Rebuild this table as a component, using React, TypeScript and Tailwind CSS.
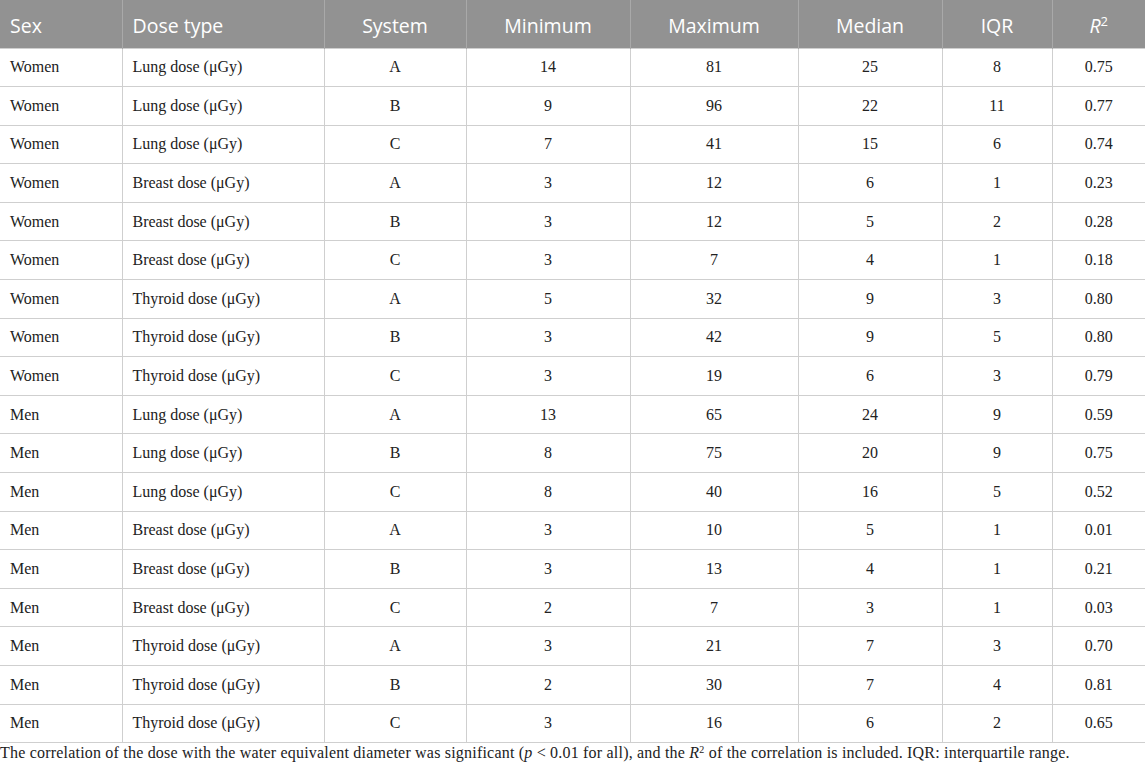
import React from 'react';

type Row = [string, string, string, number, number, number, number, string];

const ROWS: Row[] = [
  ['Women', 'Lung dose (μGy)', 'A', 14, 81, 25, 8, '0.75'],
  ['Women', 'Lung dose (μGy)', 'B', 9, 96, 22, 11, '0.77'],
  ['Women', 'Lung dose (μGy)', 'C', 7, 41, 15, 6, '0.74'],
  ['Women', 'Breast dose (μGy)', 'A', 3, 12, 6, 1, '0.23'],
  ['Women', 'Breast dose (μGy)', 'B', 3, 12, 5, 2, '0.28'],
  ['Women', 'Breast dose (μGy)', 'C', 3, 7, 4, 1, '0.18'],
  ['Women', 'Thyroid dose (μGy)', 'A', 5, 32, 9, 3, '0.80'],
  ['Women', 'Thyroid dose (μGy)', 'B', 3, 42, 9, 5, '0.80'],
  ['Women', 'Thyroid dose (μGy)', 'C', 3, 19, 6, 3, '0.79'],
  ['Men', 'Lung dose (μGy)', 'A', 13, 65, 24, 9, '0.59'],
  ['Men', 'Lung dose (μGy)', 'B', 8, 75, 20, 9, '0.75'],
  ['Men', 'Lung dose (μGy)', 'C', 8, 40, 16, 5, '0.52'],
  ['Men', 'Breast dose (μGy)', 'A', 3, 10, 5, 1, '0.01'],
  ['Men', 'Breast dose (μGy)', 'B', 3, 13, 4, 1, '0.21'],
  ['Men', 'Breast dose (μGy)', 'C', 2, 7, 3, 1, '0.03'],
  ['Men', 'Thyroid dose (μGy)', 'A', 3, 21, 7, 3, '0.70'],
  ['Men', 'Thyroid dose (μGy)', 'B', 2, 30, 7, 4, '0.81'],
  ['Men', 'Thyroid dose (μGy)', 'C', 3, 16, 6, 2, '0.65'],
];

const WIDTHS = [122, 202, 142, 164, 168, 144, 110, 93];

export default function App() {
  const th = 'font-normal border-l border-[#a9a9a9] first:border-l-0 px-[10px] pt-[3px]';
  const td = 'border-l border-t border-[#cfcfcf] first:border-l-0 px-[10px]';

  return (
    <div className="w-[1145px] h-[765px] bg-white overflow-hidden">
      <table className="w-[1145px] border-collapse table-fixed border-b border-[#cfcfcf]">
        <colgroup>
          {WIDTHS.map((w, i) => (
            <col key={i} style={{ width: w }} />
          ))}
        </colgroup>
        <thead>
          <tr
            className="h-[48px] bg-[#929292] text-white text-[19.5px]"
            style={{ fontFamily: '"Open Sans", "Noto Sans", sans-serif' }}
          >
            <th className={`${th} text-left`}>Sex</th>
            <th className={`${th} text-left`}>Dose type</th>
            <th className={`${th} text-center`}>System</th>
            <th className={`${th} text-center`}>Minimum</th>
            <th className={`${th} text-center`}>Maximum</th>
            <th className={`${th} text-center`}>Median</th>
            <th className={`${th} text-center`}>IQR</th>
            <th className={`${th} text-center`}>
              <i>R</i>
              <sup className="text-[13px]">2</sup>
            </th>
          </tr>
        </thead>
        <tbody
          className="text-[16px] text-[#222222]"
          style={{ fontFamily: '"Liberation Serif", "Times New Roman", serif' }}
        >
          {ROWS.map((r, i) => (
            <tr key={i} className="h-[38.6px]">
              <td className={`${td} text-left`}>{r[0]}</td>
              <td className={`${td} text-left`}>{r[1]}</td>
              {r.slice(2).map((v, j) => (
                <td key={j} className={`${td} text-center`}>
                  {v}
                </td>
              ))}
            </tr>
          ))}
        </tbody>
      </table>
      <p
        className="text-[16px] tracking-[0.2px] text-[#222222] leading-[20px]"
        style={{ fontFamily: '"Liberation Serif", "Times New Roman", serif' }}
      >
        The correlation of the dose with the water equivalent diameter was significant (<i>p</i> &lt; 0.01 for all),
        and the <i>R</i>
        <sup className="text-[10px]">2</sup> of the correlation is included. IQR: interquartile range.
      </p>
    </div>
  );
}
